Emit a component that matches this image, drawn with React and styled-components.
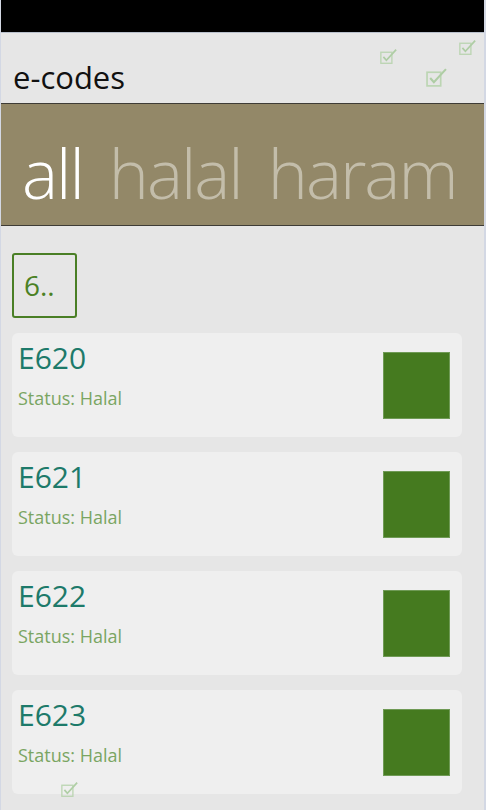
import React from 'react'
import styled, { createGlobalStyle } from 'styled-components'

const codes = ['E620', 'E621', 'E622', 'E623']

const decor = [
  { x: 379, y: 48, size: 17 },
  { x: 425, y: 67, size: 21 },
  { x: 458, y: 39, size: 17 },
  { x: 60, y: 781, size: 17 },
]

const App = () => {
  return (
    <Page>
      <GlobalStyle />
      <StatusBar />
      <TitleBar>e-codes</TitleBar>
      <Pivot>
        <PivotItem active>all</PivotItem>
        <PivotItem>halal</PivotItem>
        <PivotItem>haram</PivotItem>
      </Pivot>
      <Content>
        <SearchBox>6..</SearchBox>
        <List>
          {codes.map(code => (
            <Card key={code}>
              <CardText>
                <Code>{code}</Code>
                <Status>Status: Halal</Status>
              </CardText>
              <Swatch />
            </Card>
          ))}
        </List>
      </Content>
      {decor.map((d, i) => (
        <Decor key={i} style={{ left: d.x, top: d.y }}>
          <CheckIcon size={d.size} />
        </Decor>
      ))}
    </Page>
  )
}

const CheckIcon = ({ size }) => (
  <svg width={size} height={size} viewBox="0 0 20 20" fill="none">
    <rect x="1" y="5" width="13" height="13" stroke="#b5d3ab" strokeWidth="1.6" />
    <path d="M4 10.5 L7.5 14.5 L19 2" stroke="#a5c999" strokeWidth="2" />
  </svg>
)

export default App

const GlobalStyle = createGlobalStyle`
  html, body {
    margin: 0;
    padding: 0;
    background: #e6e6e6;
  }
  body {
    font-family: "Open Sans", "Noto Sans", "Liberation Sans", sans-serif;
  }
`

const Page = styled.div`
  position: relative;
  width: 486px;
  height: 810px;
  overflow: hidden;
  background: #e6e6e6;
  box-sizing: border-box;
  border-left: 1px solid #d3d8e4;
  border-right: 2px solid #d3d8e4;
`

const StatusBar = styled.div`
  height: 32px;
  background: #000;
  border-bottom: 1px solid #b9c0cc;
  margin: 0 -2px 0 -1px;
`

const TitleBar = styled.div`
  height: 70px;
  display: flex;
  align-items: flex-end;
  padding: 0 0 10px 12px;
  box-sizing: border-box;
  font-size: 31px;
  color: #111;
  line-height: 1;
`

const Pivot = styled.div`
  height: 123px;
  box-sizing: border-box;
  background: #938868;
  border: 1px solid #3e3c36;
  margin: 0 -2px 0 -1px;
  display: flex;
  align-items: flex-end;
  gap: 26px;
  padding: 0 0 18px 21px;
  white-space: nowrap;
  overflow: hidden;
`

const PivotItem = styled.span`
  font-size: 68px;
  font-weight: 300;
  line-height: 1;
  letter-spacing: -2px;
  color: ${p => (p.active ? '#ffffff' : '#c3bdaa')};
`

const Content = styled.div`
  padding: 27px 22px 0 11px;
`

const SearchBox = styled.div`
  width: 65px;
  height: 65px;
  box-sizing: border-box;
  border: 2px solid #4a7f26;
  border-radius: 3px;
  color: #4b8125;
  font-size: 28px;
  display: flex;
  align-items: center;
  padding-left: 10px;
  padding-bottom: 2px;
`

const List = styled.div`
  display: flex;
  flex-direction: column;
  gap: 15px;
  margin-top: 15px;
`

const Card = styled.div`
  height: 104px;
  box-sizing: border-box;
  background: #efefef;
  border-radius: 6px;
  display: flex;
  align-items: center;
  justify-content: space-between;
  padding: 0 12px 0 6px;
`

const CardText = styled.div`
  align-self: flex-start;
  display: flex;
  flex-direction: column;
  padding-top: 7px;
`

const Code = styled.div`
  font-size: 30px;
  color: #1d7a6a;
  line-height: 1.2;
`

const Status = styled.div`
  font-size: 18px;
  color: #7aa562;
  margin-top: 10px;
`

const Swatch = styled.div`
  width: 67px;
  height: 67px;
  box-sizing: border-box;
  background: #457a1f;
  border: 1px solid #6f9a55;
`

const Decor = styled.div`
  position: absolute;
  display: flex;
  opacity: 0.85;
`
